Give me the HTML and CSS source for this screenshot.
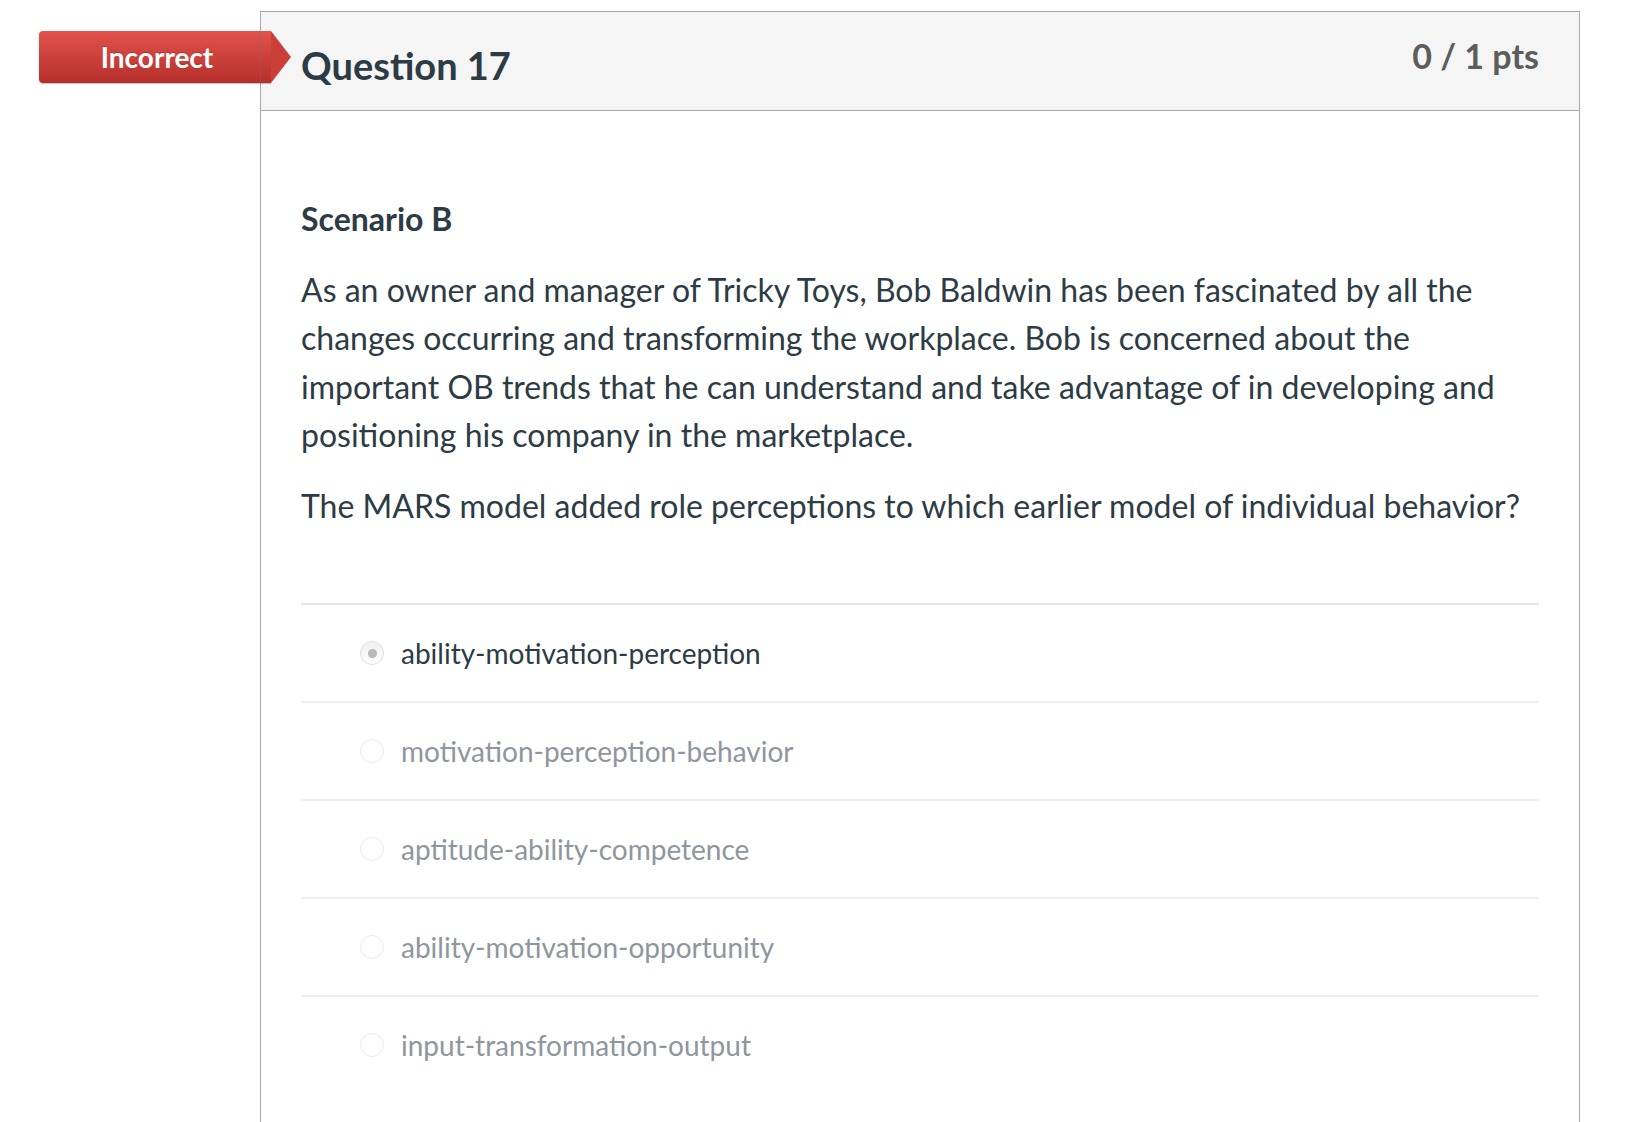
FILE: index.html
```html
<!DOCTYPE html>
<html lang="en">
<head>
<meta charset="utf-8">
<title>Question 17</title>
<link rel="stylesheet" href="styles.css">
</head>
<body>
<div class="page">
  <div class="card">
    <div class="badge">
      <span class="badge-text">Incorrect</span>
    </div>
    <div class="card-header">
      <h2 class="q-title">Question 17</h2>
      <div class="q-pts">0 / 1 pts</div>
    </div>
    <div class="card-body">
      <h3 class="scenario">Scenario B</h3>
      <p class="q-text">As an owner and manager of Tricky Toys, Bob Baldwin has been fascinated by all the changes occurring and transforming the workplace. Bob is concerned about the important OB trends that he can understand and take advantage of in developing and positioning his company in the marketplace.</p>
      <p class="q-text">The MARS model added role perceptions to which earlier model of individual behavior?</p>
      <div class="answers">
        <div class="answer selected"><span class="radio"><span class="dot"></span></span><span class="label">ability-motivation-perception</span></div>
        <div class="answer"><span class="radio"></span><span class="label">motivation-perception-behavior</span></div>
        <div class="answer"><span class="radio"></span><span class="label">aptitude-ability-competence</span></div>
        <div class="answer"><span class="radio"></span><span class="label">ability-motivation-opportunity</span></div>
        <div class="answer"><span class="radio"></span><span class="label">input-transformation-output</span></div>
      </div>
    </div>
  </div>
</div>
</body>
</html>
```

FILE: styles.css
```css
html, body {
  margin: 0;
  padding: 0;
  background: #ffffff;
}
body {
  font-family: Lato, "Open Sans", "Liberation Sans", sans-serif;
  color: #2d3b45;
  overflow: hidden;
  height: 1122px;
}
.page {
  padding: 11px 0 0 260px;
}
.card {
  position: relative;
  box-sizing: border-box;
  width: 1320px;
  height: 1200px;
  border: 1px solid #a8a8a8;
  border-bottom: none;
}
.card-header {
  display: flex;
  justify-content: space-between;
  align-items: flex-start;
  height: 98px;
  padding: 0 40px;
  background: #f5f5f5;
  border-bottom: 1px solid #a8a8a8;
}
.q-title {
  margin: 0;
  padding-top: 29px;
  font-size: 38px;
  line-height: 48px;
  font-weight: 700;
  color: #2d3b45;
}
.q-pts {
  padding-top: 22px;
  font-size: 34px;
  line-height: 44px;
  font-weight: 700;
  color: #5c5c5c;
}
.badge {
  position: absolute;
  left: -222px;
  top: 19px;
  width: 232px;
  height: 52px;
  box-sizing: border-box;
  background: linear-gradient(#e3524c, #b52f2a);
  border-radius: 4px 0 0 4px;
  display: flex;
  align-items: center;
  justify-content: center;
  box-shadow: 0 1px 1px rgba(0,0,0,0.25);
}
.badge::after {
  content: "";
  position: absolute;
  right: -20px;
  top: 0;
  width: 0;
  height: 0;
  border-top: 26px solid transparent;
  border-bottom: 26px solid transparent;
  border-left: 20px solid #cc3f39;
}
.badge::before {
  content: "";
  position: absolute;
  left: 221px;
  top: 0;
  width: 1px;
  height: 52px;
  background: rgba(110, 110, 110, 0.45);
}
.badge-text {
  color: #ffffff;
  font-size: 28px;
  font-weight: 700;
  margin-left: 4px;
  text-shadow: 0 -1px 0 rgba(0,0,0,0.2);
}
.card-body {
  padding: 86px 40px 0 40px;
}
.scenario {
  margin: 0 0 25px 0;
  font-size: 32px;
  line-height: 44px;
  font-weight: 700;
}
.q-text {
  margin: 0 0 22px 0;
  font-size: 32px;
  line-height: 48.4px;
}
.answers {
  margin-top: 73px;
  border-top: 2px solid #e5e5e5;
}
.answer {
  display: flex;
  align-items: center;
  height: 96px;
  border-bottom: 2px solid #eeeeee;
  padding-left: 59px;
}
.answer:last-child {
  border-bottom: none;
}
.radio {
  width: 24px;
  height: 24px;
  box-sizing: border-box;
  border-radius: 50%;
  border: 1px solid #ececec;
  background: #ffffff;
  display: flex;
  align-items: center;
  justify-content: center;
  margin-right: 17px;
}
.selected .radio {
  border-color: #dedede;
  background: linear-gradient(#f0f0f0, #ffffff);
}
.dot {
  width: 9px;
  height: 9px;
  border-radius: 50%;
  background: #b8b8b8;
}
.label {
  font-size: 28px;
  color: #8f969d;
}
.selected .label {
  color: #2d3b45;
}
```
